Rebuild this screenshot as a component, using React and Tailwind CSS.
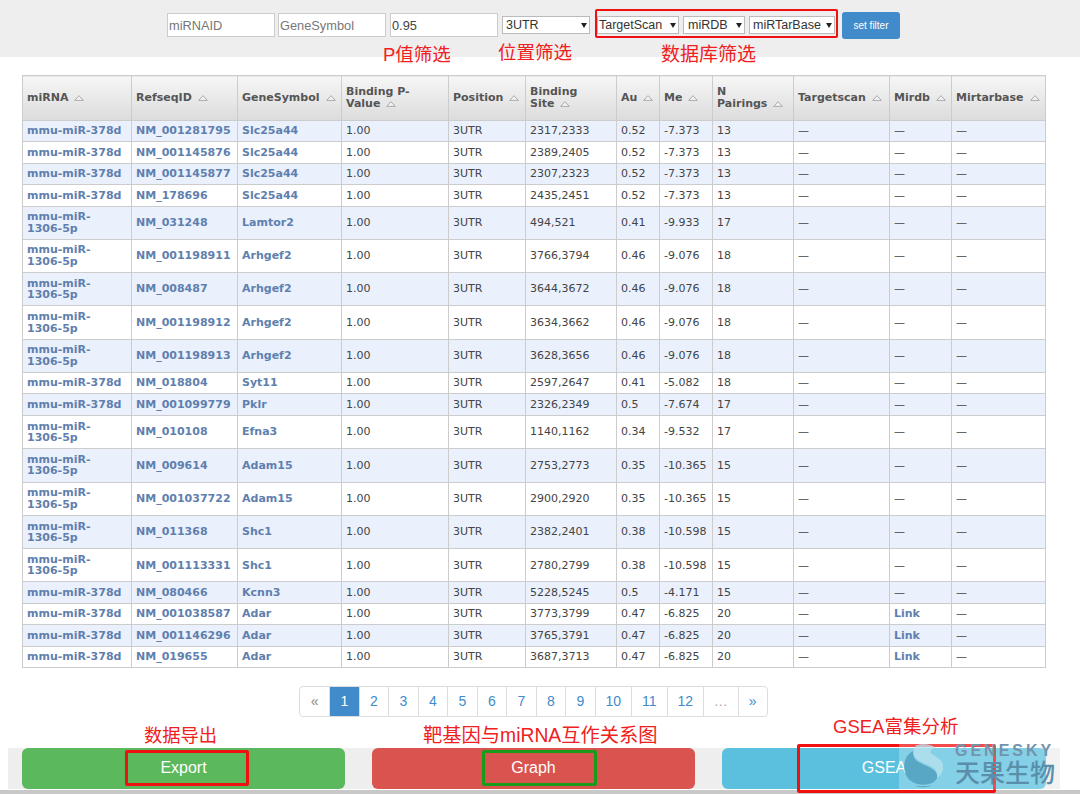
import React from 'react';

const columns = [
  { label: ['miRNA'], width: 109 },
  { label: ['RefseqID'], width: 106 },
  { label: ['GeneSymbol'], width: 104 },
  { label: ['Binding P-', 'Value'], width: 107 },
  { label: ['Position'], width: 77 },
  { label: ['Binding', 'Site'], width: 91 },
  { label: ['Au'], width: 43 },
  { label: ['Me'], width: 53 },
  { label: ['N', 'Pairings'], width: 81 },
  { label: ['Targetscan'], width: 96 },
  { label: ['Mirdb'], width: 62 },
  { label: ['Mirtarbase'], width: 94 },
];

const S = 'mmu-miR-378d';
const L = 'mmu-miR-1306-5p';

const rows = [
  [S, 'NM_001281795', 'Slc25a44', '2317,2333', '0.52', '-7.373', '13'],
  [S, 'NM_001145876', 'Slc25a44', '2389,2405', '0.52', '-7.373', '13'],
  [S, 'NM_001145877', 'Slc25a44', '2307,2323', '0.52', '-7.373', '13'],
  [S, 'NM_178696', 'Slc25a44', '2435,2451', '0.52', '-7.373', '13'],
  [L, 'NM_031248', 'Lamtor2', '494,521', '0.41', '-9.933', '17'],
  [L, 'NM_001198911', 'Arhgef2', '3766,3794', '0.46', '-9.076', '18'],
  [L, 'NM_008487', 'Arhgef2', '3644,3672', '0.46', '-9.076', '18'],
  [L, 'NM_001198912', 'Arhgef2', '3634,3662', '0.46', '-9.076', '18'],
  [L, 'NM_001198913', 'Arhgef2', '3628,3656', '0.46', '-9.076', '18'],
  [S, 'NM_018804', 'Syt11', '2597,2647', '0.41', '-5.082', '18'],
  [S, 'NM_001099779', 'Pklr', '2326,2349', '0.5', '-7.674', '17'],
  [L, 'NM_010108', 'Efna3', '1140,1162', '0.34', '-9.532', '17'],
  [L, 'NM_009614', 'Adam15', '2753,2773', '0.35', '-10.365', '15'],
  [L, 'NM_001037722', 'Adam15', '2900,2920', '0.35', '-10.365', '15'],
  [L, 'NM_011368', 'Shc1', '2382,2401', '0.38', '-10.598', '15'],
  [L, 'NM_001113331', 'Shc1', '2780,2799', '0.38', '-10.598', '15'],
  [S, 'NM_080466', 'Kcnn3', '5228,5245', '0.5', '-4.171', '15'],
  [S, 'NM_001038587', 'Adar', '3773,3799', '0.47', '-6.825', '20', true],
  [S, 'NM_001146296', 'Adar', '3765,3791', '0.47', '-6.825', '20', true],
  [S, 'NM_019655', 'Adar', '3687,3713', '0.47', '-6.825', '20', true],
];

const pages = [
  { t: '«', w: 'w-[29px]', c: 'text-[#888]' },
  { t: '1', w: 'w-[29.5px]', c: 'bg-[#428bca] text-white' },
  { t: '2', w: 'w-[29.5px]', c: 'text-[#428bca]' },
  { t: '3', w: 'w-[29.5px]', c: 'text-[#428bca]' },
  { t: '4', w: 'w-[29.5px]', c: 'text-[#428bca]' },
  { t: '5', w: 'w-[29.5px]', c: 'text-[#428bca]' },
  { t: '6', w: 'w-[29.5px]', c: 'text-[#428bca]' },
  { t: '7', w: 'w-[29.5px]', c: 'text-[#428bca]' },
  { t: '8', w: 'w-[29.5px]', c: 'text-[#428bca]' },
  { t: '9', w: 'w-[29.5px]', c: 'text-[#428bca]' },
  { t: '10', w: 'w-[36px]', c: 'text-[#428bca]' },
  { t: '11', w: 'w-[36px]', c: 'text-[#428bca]' },
  { t: '12', w: 'w-[36px]', c: 'text-[#428bca]' },
  { t: '…', w: 'w-[35px]', c: 'text-[#aaa]' },
  { t: '»', w: 'w-[29px]', c: 'text-[#428bca]' },
];

const SortIcon = () => (
  <svg width="10" height="6" viewBox="0 0 10 6" className="inline-block ml-[6px] align-baseline">
    <path d="M5 .7 9.3 5.4H.7Z" fill="#f2f2f2" stroke="#9a9a9a" strokeWidth="0.8" />
  </svg>
);

const FakeSelect = ({ label, className }) => (
  <div className={`mt-[3px] flex h-[18px] items-center justify-between border border-[#bbb] bg-white pr-[2px] text-[12.5px] text-[#333] ${className}`}>
    <span>{label}</span>
    <svg width="6" height="5" viewBox="0 0 6 5">
      <path d="M0 0h6L3 5Z" fill="#222" />
    </svg>
  </div>
);

const Label = ({ className, children }) => (
  <div className={`absolute whitespace-nowrap leading-[22px] text-[#f02020] ${className}`}>{children}</div>
);

const cell = 'border border-[#ccc] px-[4px] py-0 align-middle';

const App = () => {
  return (
    <div className="relative h-[794px] w-[1080px] overflow-hidden bg-white font-['Liberation_Sans','Noto_Sans_CJK_SC',sans-serif]">
      {/* filter bar */}
      <div className="flex h-[57px] items-start bg-[#eeeeee] pl-[167px] pt-[13px]">
        <input placeholder="miRNAID" className="h-[24px] w-[108px] border border-[#ccc] bg-white px-[1px] text-[12.8px] placeholder:text-[#777]" />
        <input placeholder="GeneSymbol" className="ml-[3px] h-[24px] w-[108px] border border-[#ccc] bg-white px-[1px] text-[12.8px] placeholder:text-[#777]" />
        <input defaultValue="0.95" className="ml-[4px] h-[24px] w-[108px] border border-[#ccc] bg-white px-[1px] text-[12.8px] text-[#444]" />
        <FakeSelect label="3UTR" className="ml-[4px] w-[88px] pl-[3px]" />
        <FakeSelect label="TargetScan" className="ml-[7px] w-[82px] pl-[1px]" />
        <FakeSelect label="miRDB" className="ml-[4px] w-[62px] pl-[4px]" />
        <FakeSelect label="miRTarBase" className="ml-[4px] w-[86px] pl-[3px]" />
        <button className="ml-[7px] -mt-[1px] h-[27px] w-[58px] rounded-[3px] bg-[#428bca] text-[10px] text-white">set filter</button>
      </div>

      {/* results table */}
      <div className="pl-[22px] pt-[18px]">
        <table className="w-[1024px] table-fixed border-collapse border border-[#ccc] font-['DejaVu_Sans',sans-serif] text-[11px] leading-[11.5px] text-[#444]">
          <colgroup>
            {columns.map((c) => (
              <col key={c.label[0]} style={{ width: c.width }} />
            ))}
          </colgroup>
          <thead>
            <tr className="h-[44.5px]">
              {columns.map((c) => (
                <th key={c.label[0]} className={`${cell} border-[#c4c4c4] bg-gradient-to-b from-[#f6f6f6] to-[#dcdcdc] text-left font-bold text-[#555]`}>
                  {c.label.length > 1 && (
                    <>
                      {c.label[0]}
                      <br />
                    </>
                  )}
                  {c.label[c.label.length - 1]}
                  <SortIcon />
                </th>
              ))}
            </tr>
          </thead>
          <tbody>
            {rows.map((r, i) => (
              <tr key={r[1]} className={`${r[0] === L ? 'h-[33.3px]' : 'h-[21.5px]'} ${i % 2 === 0 ? 'bg-[#eaf1fd]' : 'bg-white'}`}>
                <td className={`${cell} font-bold text-[#5f7fae]`}>
                  {r[0] === L ? (
                    <>
                      mmu-miR-
                      <br />
                      1306-5p
                    </>
                  ) : (
                    r[0]
                  )}
                </td>
                <td className={`${cell} whitespace-nowrap font-bold text-[#5f7fae]`}>{r[1]}</td>
                <td className={`${cell} font-bold text-[#5f7fae]`}>{r[2]}</td>
                <td className={cell}>1.00</td>
                <td className={cell}>3UTR</td>
                <td className={cell}>{r[3]}</td>
                <td className={cell}>{r[4]}</td>
                <td className={`${cell} whitespace-nowrap`}>{r[5]}</td>
                <td className={cell}>{r[6]}</td>
                <td className={cell}>—</td>
                <td className={`${cell} ${r[7] ? 'font-bold text-[#5f7fae]' : ''}`}>{r[7] ? 'Link' : '—'}</td>
                <td className={cell}>—</td>
              </tr>
            ))}
          </tbody>
        </table>
      </div>

      {/* pagination */}
      <div className="mt-[17.5px] flex justify-center pr-[13px]">
        <div className="flex h-[31px] overflow-hidden rounded-[4px] border border-[#ddd] text-[14px]">
          {pages.map((p) => (
            <div key={p.t} className={`flex items-center justify-center border-l border-[#ddd] first:border-l-0 ${p.w} ${p.c}`}>
              {p.t}
            </div>
          ))}
        </div>
      </div>

      {/* action buttons */}
      <div className="ml-[8px] mt-[31px] flex h-[41px] w-[1052px] items-stretch bg-[#eeeeee] pl-[14px] text-[16px] text-white">
        <button className="w-[323px] rounded-[6px] bg-[#5cb85c]">Export</button>
        <button className="ml-[27px] w-[323px] rounded-[6px] bg-[#d9534f]">Graph</button>
        <button className="ml-[27px] w-[324px] rounded-[6px] bg-[#5bc0de]">GSEA</button>
      </div>
      <div className="mt-[1px] h-[5px] bg-[#c8c8c8]" />

      {/* red annotations on top of the screenshot */}
      <div className="absolute left-[595px] top-[9px] h-[29px] w-[243px] rounded-[2px] border-[2px] border-[#f01010]" />
      <Label className="left-[383px] top-[44px] text-[18.5px]">P值筛选</Label>
      <Label className="left-[498px] top-[42px] text-[18.5px]">位置筛选</Label>
      <Label className="left-[661px] top-[44px] text-[19px]">数据库筛选</Label>
      <Label className="left-[144px] top-[725px] text-[18.3px]">数据导出</Label>
      <Label className="left-[423px] top-[725px] text-[19.3px]">靶基因与miRNA互作关系图</Label>
      <Label className="left-[833px] top-[716px] text-[18.5px]">GSEA富集分析</Label>
      <div className="absolute left-[125px] top-[750px] h-[36px] w-[124px] rounded-[2px] border-[3px] border-[#f01010]" />
      <div className="absolute left-[482px] top-[750px] h-[36px] w-[115px] rounded-[2px] border-[3px] border-[#1a9a1a]" />
      <div className="absolute left-[797px] top-[744px] h-[49px] w-[199px] rounded-[2px] border-[3px] border-[#f01010]" />

      {/* watermark */}
      <div className="absolute left-[899px] top-[743px] h-[47px] w-[161px] bg-white/25">
        <svg width="50" height="46" viewBox="0 0 50 46" className="absolute left-[1px] top-0">
          <path d="M8 12C2 20 3 32 11 38c7 5 18 5 24 0 3-3 3-7 0-10-5-5-16-7-20-12-2-3-2-6 0-9C12 8 10 10 8 12Z" fill="#4d9cbd" fillOpacity="0.8" />
          <path d="M17 2c6-2 14-1 19 3-4 0-6 2-5 5 2 3 8 4 11 9 3 6 0 13-5 16 1-6-2-10-9-13-7-3-15-6-15-13 0-3 2-6 4-7Z" fill="#b9e2ee" fillOpacity="0.75" />
          <path d="M14 42c5 2 12 2 18 0-5 3-13 3-18 0Z" fill="#3f8aac" />
        </svg>
        <div className="absolute left-[56px] top-[0px] h-[15px] whitespace-nowrap font-['Liberation_Sans',sans-serif] text-[16px] font-bold leading-[15px] tracking-[3px] text-[#7294ad]">GENESKY</div>
        <div className="absolute left-[56px] top-[15px] h-[27px] whitespace-nowrap font-['Noto_Sans_CJK_SC',sans-serif] text-[25px] font-medium leading-[27px] text-[#5a8fac]">天果生物</div>
      </div>
    </div>
  );
};

export default App;
